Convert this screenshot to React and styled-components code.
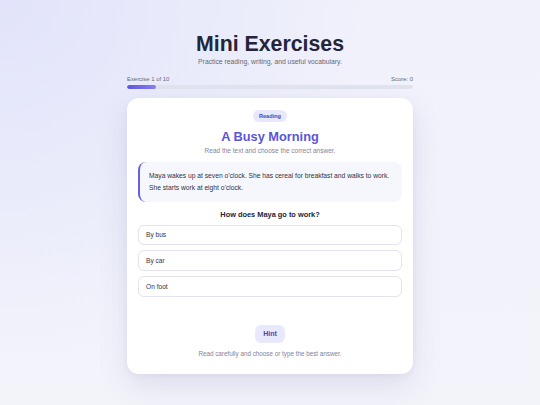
import React from "react";
import styled, { createGlobalStyle } from "styled-components";

const GlobalStyle = createGlobalStyle`
  * { box-sizing: border-box; }
  html, body {
    margin: 0;
    padding: 0;
  }
  body {
    min-height: 405px;
    font-family: "Liberation Sans", Arial, sans-serif;
    background:
      radial-gradient(circle at 0% 0%, rgba(218, 220, 250, 0.65) 0%, rgba(218, 220, 250, 0) 55%),
      linear-gradient(180deg, #f0f1fa 0%, #f3f4fa 100%);
    -webkit-font-smoothing: antialiased;
  }
`;

const Page = styled.main`
  width: 286px;
  margin: 0 auto;
  padding-top: 33px;
  padding-bottom: 30px;
`;

const Header = styled.header`
  text-align: center;
`;

const Title = styled.h1`
  margin: 0;
  font-size: 21.3px;
  line-height: 23px;
  font-weight: 700;
  color: #23253b;
`;

const Subtitle = styled.p`
  margin: 1px 0 0;
  font-size: 6.8px;
  line-height: 9px;
  color: #666979;
`;

const ProgressMeta = styled.div`
  display: flex;
  justify-content: space-between;
  margin-top: 9px;
  font-size: 5.9px;
  line-height: 8px;
  color: #666979;
`;

const Track = styled.div`
  margin-top: 2px;
  height: 4px;
  border-radius: 2px;
  background: #e1e3ef;
  overflow: hidden;
`;

const Fill = styled.div`
  height: 100%;
  border-radius: 2px;
  background: linear-gradient(90deg, #5f55e0 0%, #8a7ff0 100%);
`;

const Card = styled.section`
  margin-top: 9px;
  background: #ffffff;
  border-radius: 12px;
  padding: 12px 11px 16px;
  display: flex;
  flex-direction: column;
  align-items: center;
  box-shadow: 0 12px 30px rgba(70, 72, 130, 0.13), 0 2px 6px rgba(70, 72, 130, 0.05);
`;

const Tag = styled.span`
  display: inline-block;
  height: 12px;
  line-height: 12px;
  padding: 0 5.8px;
  border-radius: 6px;
  background: #e8e8fd;
  color: #4b45b5;
  font-size: 5.6px;
  font-weight: 700;
`;

const ExerciseTitle = styled.h2`
  margin: 7px 0 0;
  font-size: 12.8px;
  line-height: 15px;
  font-weight: 700;
  color: #5b56d8;
`;

const Instruction = styled.p`
  margin: 2px 0 0;
  font-size: 6.5px;
  line-height: 9px;
  color: #80839a;
`;

const Passage = styled.blockquote`
  align-self: stretch;
  margin: 7px 0 0;
  padding: 8px 10px 8px 9px;
  border-left: 2px solid #6660dc;
  border-radius: 8px;
  background: #f6f7fd;
  font-size: 6.7px;
  line-height: 12px;
  color: #2f3142;
`;

const Question = styled.p`
  margin: 7.5px 0 0;
  font-size: 7.4px;
  line-height: 10px;
  font-weight: 700;
  color: #22243a;
`;

const Options = styled.div`
  align-self: stretch;
  margin-top: 5px;
  display: flex;
  flex-direction: column;
  gap: 5.3px;
`;

const Option = styled.button`
  height: 20.5px;
  padding: 0 7px;
  text-align: left;
  background: #ffffff;
  border: 1px solid #e2e3ec;
  border-radius: 6px;
  font-family: inherit;
  font-size: 6.6px;
  color: #343446;
  cursor: pointer;
`;

const HintButton = styled.button`
  margin-top: 28px;
  height: 18px;
  padding: 0 8.7px;
  border: none;
  border-radius: 6px;
  background: #e9e9fd;
  color: #4b47b7;
  font-family: inherit;
  font-size: 7px;
  font-weight: 700;
  cursor: pointer;
`;

const Footnote = styled.p`
  margin: 6.3px 0 0;
  font-size: 6.3px;
  line-height: 9px;
  color: #80839a;
`;

const options = ["By bus", "By car", "On foot"];

export default function App() {
  const current = 1;
  const total = 10;
  return (
    <>
      <GlobalStyle />
      <Page>
        <Header>
          <Title>Mini Exercises</Title>
          <Subtitle>Practice reading, writing, and useful vocabulary.</Subtitle>
        </Header>
        <ProgressMeta>
          <span>
            Exercise {current} of {total}
          </span>
          <span>Score: 0</span>
        </ProgressMeta>
        <Track>
          <Fill style={{ width: `${(current / total) * 100}%` }} />
        </Track>
        <Card>
          <Tag>Reading</Tag>
          <ExerciseTitle>A Busy Morning</ExerciseTitle>
          <Instruction>Read the text and choose the correct answer.</Instruction>
          <Passage>
            Maya wakes up at seven o’clock. She has cereal for breakfast and walks to work.
            She starts work at eight o’clock.
          </Passage>
          <Question>How does Maya go to work?</Question>
          <Options>
            {options.map((o) => (
              <Option key={o}>{o}</Option>
            ))}
          </Options>
          <HintButton>Hint</HintButton>
          <Footnote>Read carefully and choose or type the best answer.</Footnote>
        </Card>
      </Page>
    </>
  );
}
